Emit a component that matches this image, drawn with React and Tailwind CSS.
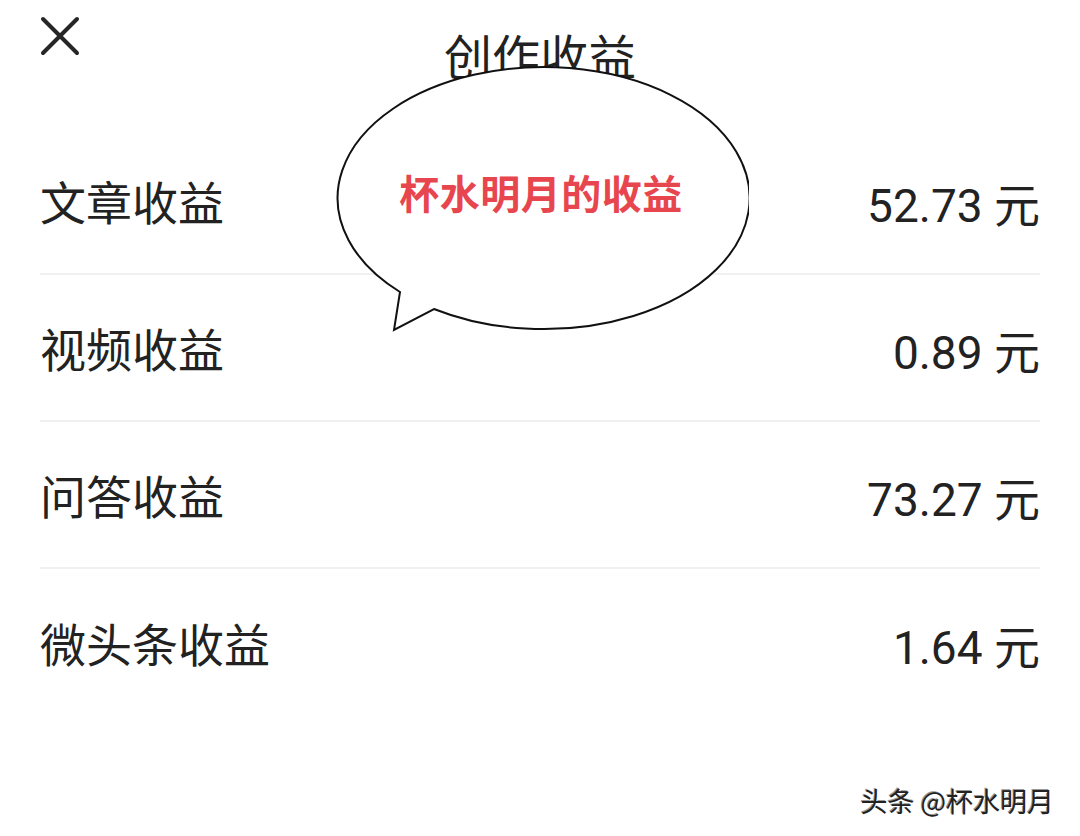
import React from 'react';

const rows = [
  { label: '文章收益', value: '52.73 元' },
  { label: '视频收益', value: '0.89 元' },
  { label: '问答收益', value: '73.27 元' },
  { label: '微头条收益', value: '1.64 元' },
];

/* ---------- speech bubble overlay ---------- */
const Bubble = () => (
  <div className="absolute left-[333px] top-[63px] w-[416px] h-[270px]">
    <svg width="416" height="270" viewBox="0 0 416 270" className="absolute inset-0">
      <path
        d="M 67 229 A 206 131 0 1 1 101 246 L 61 267 Z"
        fill="#ffffff"
        stroke="#111111"
        strokeWidth="2"
        strokeLinejoin="miter"
      />
    </svg>
    <div className="relative flex h-[258px] items-center justify-center">
      <span className="text-[40px] font-bold leading-none tracking-[0.5px] text-[#e8464e]">
        杯水明月的收益
      </span>
    </div>
  </div>
);

export default function App() {
  return (
    <div
      className="relative w-[1080px] h-[836px] overflow-hidden bg-white text-[#222222]"
      style={{ fontFamily: '"Noto Sans CJK SC", "Noto Sans", sans-serif' }}
    >
      {/* Header */}
      <div className="grid h-[128px] grid-cols-[1fr_auto_1fr] items-start px-[40px]">
        <svg width="40" height="40" viewBox="0 0 40 40" className="mt-[16px]">
          <path d="M3 3 L37 37 M37 3 L3 37" stroke="#262626" strokeWidth="4" strokeLinecap="round" />
        </svg>
        <h1 className="mt-[30px] text-[48px] font-normal leading-none">创作收益</h1>
        <div />
      </div>

      {/* Rows */}
      <div className="px-[40px]">
        {rows.map((r, i) => (
          <div
            key={r.label}
            className={`flex h-[147px] items-center justify-between pb-[2px] ${
              i < rows.length - 1 ? 'border-b-2 border-[#f0f0f0]' : ''
            }`}
          >
            <span className="text-[46px] leading-none">{r.label}</span>
            <span
              className="mt-[12px] text-[46px] leading-none"
              style={{ fontFamily: 'Roboto, "Noto Sans CJK SC", sans-serif' }}
            >
              {r.value}
            </span>
          </div>
        ))}
      </div>

      <Bubble />

      {/* watermark */}
      <div className="absolute right-[26px] bottom-[22px] text-[27px] leading-none text-[#222222] [text-shadow:1px_1px_0_#ffffff,-1px_-1px_0_#999999]">
        头条 @杯水明月
      </div>
    </div>
  );
}
